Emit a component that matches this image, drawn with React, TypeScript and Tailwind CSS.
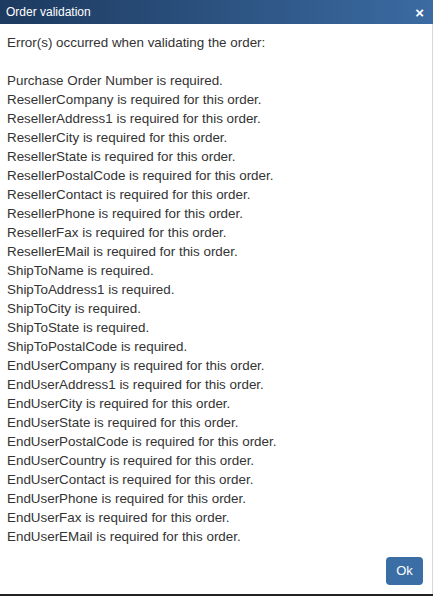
import React from 'react';

const errors = [
  'Purchase Order Number is required.',
  'ResellerCompany is required for this order.',
  'ResellerAddress1 is required for this order.',
  'ResellerCity is required for this order.',
  'ResellerState is required for this order.',
  'ResellerPostalCode is required for this order.',
  'ResellerContact is required for this order.',
  'ResellerPhone is required for this order.',
  'ResellerFax is required for this order.',
  'ResellerEMail is required for this order.',
  'ShipToName is required.',
  'ShipToAddress1 is required.',
  'ShipToCity is required.',
  'ShipToState is required.',
  'ShipToPostalCode is required.',
  'EndUserCompany is required for this order.',
  'EndUserAddress1 is required for this order.',
  'EndUserCity is required for this order.',
  'EndUserState is required for this order.',
  'EndUserPostalCode is required for this order.',
  'EndUserCountry is required for this order.',
  'EndUserContact is required for this order.',
  'EndUserPhone is required for this order.',
  'EndUserFax is required for this order.',
  'EndUserEMail is required for this order.',
];

const App = () => {
  return (
    <div className="w-[433px] h-[596px] bg-white flex flex-col font-['Liberation_Sans',Arial,sans-serif]">
      {/* Title bar */}
      <div className="h-[24px] flex items-center justify-between pl-[6px] pr-[9px] bg-gradient-to-r from-[#1d3a5f] to-[#3b6ba2]">
        <span className="text-white text-[12px]">Order validation</span>
        <span className="text-white text-[15px] font-bold leading-none">×</span>
      </div>

      {/* Body */}
      <div className="flex-1 flex flex-col border-r border-[#d8d8d8]">
        <div className="pt-[9px] px-[7px] text-[13.4px] leading-[19px] text-[#333]">
          <div>Error(s) occurred when validating the order:</div>
          <div className="h-[19px]" />
          {errors.map((e) => (
            <div key={e}>{e}</div>
          ))}
        </div>
        <div className="flex justify-end pr-[9px] mt-auto mb-[9px]">
          <button className="w-[37px] h-[28px] rounded-[4px] bg-[#3a6ea5] text-white text-[13px]">
            Ok
          </button>
        </div>
      </div>
      <div className="h-[2px] bg-[#222]" />
    </div>
  );
};

export default App;
